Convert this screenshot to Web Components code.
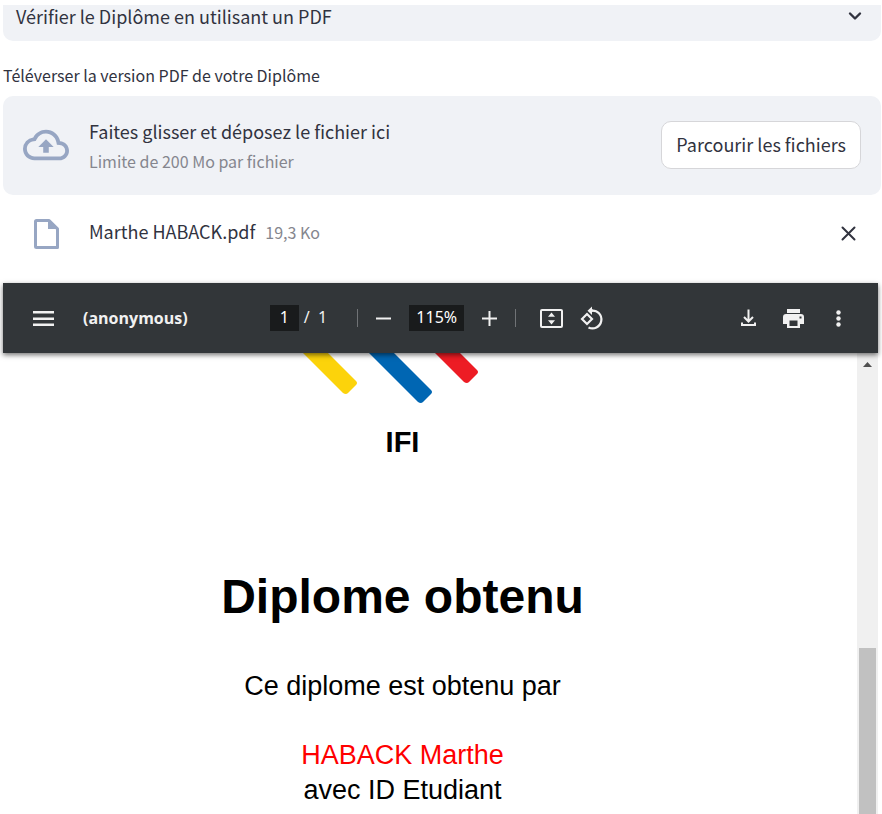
<!DOCTYPE html>
<html lang="fr">
<head>
<meta charset="utf-8">
<title>Vérification du diplôme</title>
<style>
html, body { height: 100%; }
body { margin: 0; background: #fff; color: #31333f; font: 18px/28px "Noto Sans CJK SC", "Open Sans", sans-serif; }
</style>
</head>
<body>
<app-page>
  <app-expander>Vérifier le Diplôme en utilisant un PDF</app-expander>
  <file-uploader label="Téléverser la version PDF de votre Diplôme" limit="Limite de 200 Mo par fichier">
    <uploaded-file size="19,3 Ko">Marthe HABACK.pdf</uploaded-file>
  </file-uploader>
  <pdf-viewer>
    <pdf-toolbar slot="toolbar" name="(anonymous)"></pdf-toolbar>
    <diploma-page></diploma-page>
  </pdf-viewer>
</app-page>
<script>
const define = (name, html, init) => customElements.define(name, class extends HTMLElement {
  constructor() {
    super();
    this.attachShadow({ mode: 'open' }).innerHTML = html;
  }
  connectedCallback() { if (init) init(this, this.shadowRoot); }
});

define('app-page', `
<style>
:host { display: flex; flex-direction: column; box-sizing: border-box; height: 100vh; padding: 5px 1px 0 3px; overflow: hidden; }
</style><slot></slot>`);

define('app-expander', `
<style>
:host { display: block; flex: none; }
button { display: flex; width: 100%; align-items: center; justify-content: space-between; border: 0; border-radius: 0 0 10px 10px; background: #f0f2f6; color: inherit; font: inherit; line-height: 24px; padding: 0 18px 14px 13px; height: 36px; text-align: left; }
svg { display: block; }
</style>
<button type="button" aria-expanded="false"><span><slot></slot></span>
<svg width="16" height="16" viewBox="0 0 16 16" fill="none" stroke="#31333f" stroke-width="2.4" stroke-linecap="round" stroke-linejoin="round"><path d="M3 5.5 8 10.5 13 5.5"/></svg></button>`);

define('file-uploader', `
<style>
:host { display: block; flex: none; padding-top: 22px; }
label { display: block; font-size: 16px; line-height: 24px; padding-bottom: 9px; }
.drop { display: flex; align-items: center; gap: 20px; background: #f0f2f6; border-radius: 10px; padding: 19px 20px 20px; }
.drop > svg { flex: none; }
.text { flex: 1; min-width: 0; }
.text div { line-height: 32px; }
.text small { display: block; font-size: 16px; line-height: 28px; color: #85868e; }
button { height: 48px; padding: 0 14px; border: 1px solid #d6d6d9; border-radius: 10px; background: #fff; color: inherit; font: inherit; line-height: 24px; padding-bottom: 2px; white-space: nowrap; }
</style>
<label for="browse"></label>
<div class="drop">
<svg width="46" height="46" viewBox="0 0 24 24" fill="#97a6c3"><path d="M19.35 10.04A7.49 7.49 0 0 0 12 4C9.11 4 6.6 5.64 5.35 8.04A5.994 5.994 0 0 0 0 14c0 3.31 2.69 6 6 6h13c2.76 0 5-2.24 5-5 0-2.64-2.05-4.78-4.65-4.96zM19 18H6c-2.21 0-4-1.79-4-4 0-2.05 1.53-3.76 3.56-3.97l1.07-.11.5-.95A5.469 5.469 0 0 1 12 6c2.62 0 4.88 1.86 5.39 4.43l.3 1.5 1.53.11A2.98 2.98 0 0 1 22 15c0 1.65-1.35 3-3 3zM8 13h2.55v3h2.9v-3H16l-4-4z"/></svg>
<div class="text"><div>Faites glisser et déposez le fichier ici</div><small></small></div>
<button id="browse" type="button">Parcourir les fichiers</button>
</div>
<slot></slot>`, (el, root) => {
  root.querySelector('label').textContent = el.getAttribute('label');
  root.querySelector('small').textContent = el.getAttribute('limit');
});

define('uploaded-file', `
<style>
:host { display: flex; align-items: center; padding: 19px 20px 30px 28px; }
svg { display: block; flex: none; }
.name { flex: 1; padding: 0 0 4px 28px; display: flex; align-items: baseline; gap: 10px; line-height: 34px; }
small { font-size: 16px; color: #85868e; }
button { border: 0; background: none; padding: 0; color: inherit; }
</style>
<svg width="30" height="38" viewBox="-3 0 30 38" fill="none" stroke="#97a6c3" stroke-width="3"><path d="M2.5 5.5h12.6l8.4 8.4v18.600H2.500Q1.500 32.500 1.500 31.500V6.500Q1.500 5.500 2.500 5.500Z" stroke-linejoin="round"/><path d="M14 4.500V14h10z" fill="#97a6c3" stroke="none"/></svg>
<span class="name"><span><slot></slot></span><small></small></span>
<button type="button" aria-label="Supprimer le fichier"><svg width="25" height="25" viewBox="0 0 25 25" stroke="#31333f" stroke-width="2" stroke-linecap="round"><path d="m6.500 6.500 12 12m0-12-12 12"/></svg></button>`, (el, root) => {
  root.querySelector('small').textContent = el.getAttribute('size');
});

define('pdf-viewer', `
<style>
:host { display: flex; flex-direction: column; flex: 1; min-height: 0; margin-right: 3px; }
.body { display: flex; flex: 1; min-height: 0; }
.view { flex: 1; overflow: hidden; }
.bar { width: 17px; padding: 0 2px; background: #f0f0f0; display: flex; flex-direction: column; }
.bar svg { display: block; margin: 8px auto 0; flex: none; }
.thumb { background: #c1c1c1; margin-top: auto; height: 36%; }
</style>
<slot name="toolbar"></slot>
<div class="body"><div class="view"><slot></slot></div>
<div class="bar"><svg width="9" height="6" viewBox="0 0 9 6"><path d="M0 6 4.500 1 9 6z" fill="#505050"/></svg><div class="thumb"></div></div></div>`);

define('pdf-toolbar', `
<style>
:host { display: grid; grid-template-columns: 1fr auto 1fr; align-items: center; flex: none; height: 70px; padding: 0 27px 0 28px; background: #323639; color: #f1f1f1; font: 16px/26px "Noto Sans", sans-serif; box-shadow: 0 2px 5px rgba(0,0,0,.55); position: relative; }
div { display: flex; align-items: center; }
button { border: 0; background: none; padding: 0; color: inherit; width: 25px; height: 25px; flex: none; }
svg { display: block; }
.left { gap: 27px; }
b { font-family: "Open Sans", sans-serif; font-size: 16px; font-weight: 700; }
input { box-sizing: border-box; border: 0; margin: 0; padding: 0 0 2px; height: 26px; background: #191b1c; color: #fff; font: inherit; text-align: center; }
.page { width: 29px; } .zoom { width: 55px; }
.center { margin-right: 8px; }
.total { padding: 0 30px 2px 5px; white-space: pre; }
i { width: 1px; height: 18px; background: #707376; }
.zooming { gap: 13px; padding: 0 13px; }
.fit { gap: 15px; padding-left: 23px; }
.right { justify-content: flex-end; gap: 20px; }
</style>
<div class="left">
<button type="button" aria-label="Menu"><svg width="25" height="25" viewBox="0 0 25 25" fill="currentColor"><path d="M2 5h21v2.500H2zM2 11.500h21V14H2zM2 17.500h21V20H2z"/></svg></button><b></b></div>
<div class="center">
<input class="page" value="1" aria-label="Page"><span class="total">/  1</span><i></i>
<div class="zooming">
<button type="button" aria-label="Zoom arrière"><svg width="25" height="25" viewBox="0 0 25 25" stroke="currentColor" stroke-width="2"><path d="M5 12.500h15"/></svg></button>
<input class="zoom" value="115%" aria-label="Zoom">
<button type="button" aria-label="Zoom avant"><svg width="25" height="25" viewBox="0 0 25 25" stroke="currentColor" stroke-width="2"><path d="M5 12.500h15M12.500 5v15"/></svg></button>
</div><i></i>
<div class="fit">
<button type="button" aria-label="Ajuster à la page"><svg width="25" height="25" viewBox="0 0 25 25"><rect x="2" y="4" width="21" height="17" rx="1" fill="none" stroke="currentColor" stroke-width="2"/><path d="M12.500 6.500 16 10.700H9zM12.500 18.500 9 14.300h7z" fill="currentColor"/></svg></button>
<button type="button" aria-label="Pivoter"><svg width="25" height="25" viewBox="0 0 25 25" fill="none" stroke="currentColor" stroke-width="2.200"><path d="m3 13 5-5 5 5-5 5z"/><path d="M12.500 4.600a8.900 8.900 0 1 1-3 16.800"/><path d="M10.500 4.600H14"/><path d="M13 .500v8.500L8.500 4.700z" fill="currentColor" stroke="none"/></svg></button>
</div></div>
<div class="right">
<button type="button" aria-label="Télécharger"><svg width="25" height="25" viewBox="0 0 25 25" fill="none" stroke="currentColor" stroke-width="2"><path d="M12.500 3.500v12M8 11l4.500 4.500L17 11M6 16.500V19h13v-2.500"/></svg></button>
<button type="button" aria-label="Imprimer"><svg width="25" height="25" viewBox="0 0 25 25"><path fill="currentColor" fill-rule="evenodd" d="M6 3h13v4H6zM5 8h15q3 0 3 3v7h-4v4H6v-4H2v-7q0-3 3-3zm3.500 6.500V20h8v-5.500zM18.500 10.500v2h2v-2z"/></svg></button>
<button type="button" aria-label="Plus d'actions"><svg width="25" height="25" viewBox="0 0 25 25" fill="currentColor"><circle cx="12.500" cy="6.500" r="2.200"/><circle cx="12.500" cy="12.500" r="2.200"/><circle cx="12.500" cy="18.500" r="2.200"/></svg></button>
</div>`, (el, root) => {
  root.querySelector('b').textContent = el.getAttribute('name');
});

define('diploma-page', `
<style>
:host { display: block; color: #000; text-align: center; font: 27px/35px "Liberation Sans", Arial, sans-serif; padding-right: 55px; }
svg { display: block; margin: 0 auto; }
h1, h2, p { margin: 0; }
h2 { font-size: 29px; line-height: 34px; padding-top: 17px; }
h1 { font-size: 48px; line-height: 56px; padding: 110px 0 44px; }
.who { color: #f00; padding-top: 34px; }
.id { color: #f00; }
</style>
<svg width="200" height="55" viewBox="302 352 200 55" role="img" aria-label="IFI">
<path fill="#fcd30b" d="M302 352h25l28 28q2 2 0 4l-8 8q-2 2-5 0z"/>
<path fill="#0066b3" d="M368 352h25l37 37q2 2 0 4l-8 8q-2 2-5 0z"/>
<path fill="#ed1c24" d="M434 352h25l17 17q2 2 0 4l-8 8q-2 2-5 0z"/></svg>
<h2>IFI</h2>
<h1>Diplome obtenu</h1>
<p>Ce diplome est obtenu par</p>
<p class="who">HABACK Marthe</p>
<p>avec ID Etudiant</p>
<p class="id">20215050</p>`);
</script>
</body>
</html>
